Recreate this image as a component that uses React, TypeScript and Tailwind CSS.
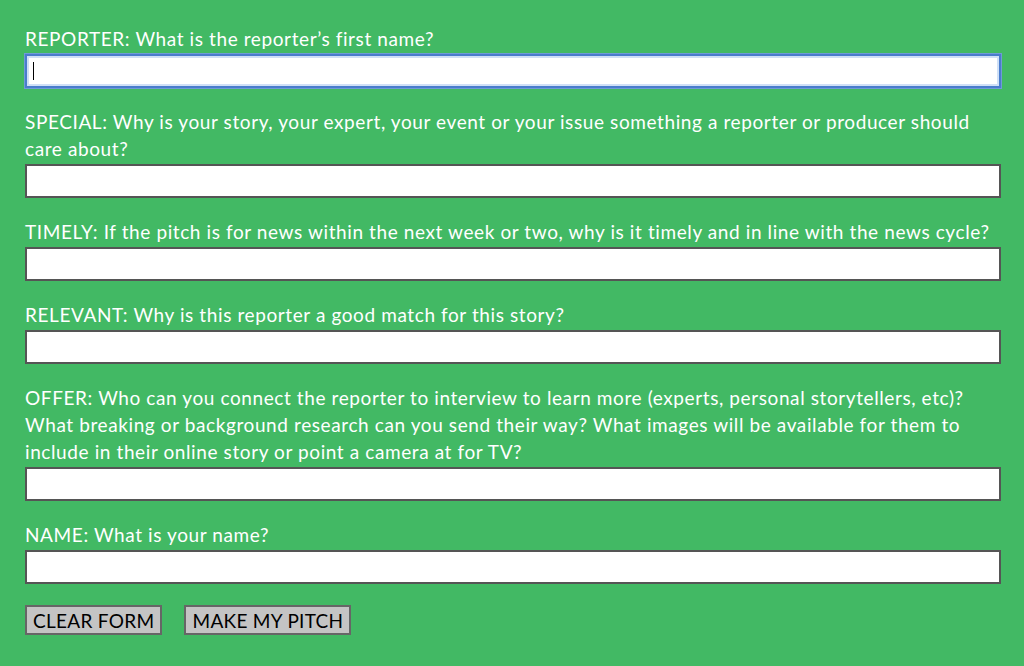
import React from "react";

const fields: { label: React.ReactNode; focused?: boolean }[] = [
  { label: "REPORTER: What is the reporter’s first name?", focused: true },
  {
    label: (
      <>
        SPECIAL: Why is your story, your expert, your event or your issue something a reporter or producer should
        <br />
        care about?
      </>
    ),
  },
  {
    label:
      "TIMELY: If the pitch is for news within the next week or two, why is it timely and in line with the news cycle?",
  },
  { label: "RELEVANT: Why is this reporter a good match for this story?" },
  {
    label: (
      <>
        OFFER: Who can you connect the reporter to interview to learn more (experts, personal storytellers, etc)?
        <br />
        What breaking or background research can you send their way? What images will be available for them to
        <br />
        include in their online story or point a camera at for TV?
      </>
    ),
  },
  { label: "NAME: What is your name?" },
];

export default function App() {
  return (
    <div
      className="min-h-[666px] w-full bg-[#42b964] pl-[25px] pr-[23px] pt-[24px] text-white"
      style={{ fontFamily: "Lato, 'Noto Sans', sans-serif" }}
    >
      <form className="flex flex-col" onSubmit={(e) => e.preventDefault()}>
        {fields.map((f, i) => (
          <div key={i} className="mb-[19px] flex flex-col">
            <label className="mb-[2px] pt-[1px] whitespace-nowrap text-[19px] leading-[27px] tracking-[0.6px]">
              {f.label}
            </label>
            <div className="relative">
              {f.focused ? (
                <>
                  <input
                    type="text"
                    className="block h-[34px] w-full border-2 border-[#4a7ccc] bg-white px-2 shadow-[inset_0_0_0_2px_#cfe0f7,0_0_0_1px_#6f9ad8] outline-none"
                  />
                  <span className="pointer-events-none absolute left-[8px] top-[8px] h-[18px] w-[1px] bg-black" />
                </>
              ) : (
                <input
                  type="text"
                  className="block h-[34px] w-full border-2 border-[#555555] bg-white px-2 outline-none"
                />
              )}
            </div>
          </div>
        ))}
        <div className="mt-[2px] flex gap-[22px]">
          <button
            type="reset"
            className="h-[30px] border-2 border-[#666666] bg-[#c4c4c4] px-[6px] text-[19px] leading-none tracking-[0.3px] text-black"
          >
            CLEAR FORM
          </button>
          <button
            type="submit"
            className="h-[30px] border-2 border-[#666666] bg-[#c4c4c4] px-[6px] text-[19px] leading-none tracking-[0.3px] text-black"
          >
            MAKE MY PITCH
          </button>
        </div>
      </form>
    </div>
  );
}
